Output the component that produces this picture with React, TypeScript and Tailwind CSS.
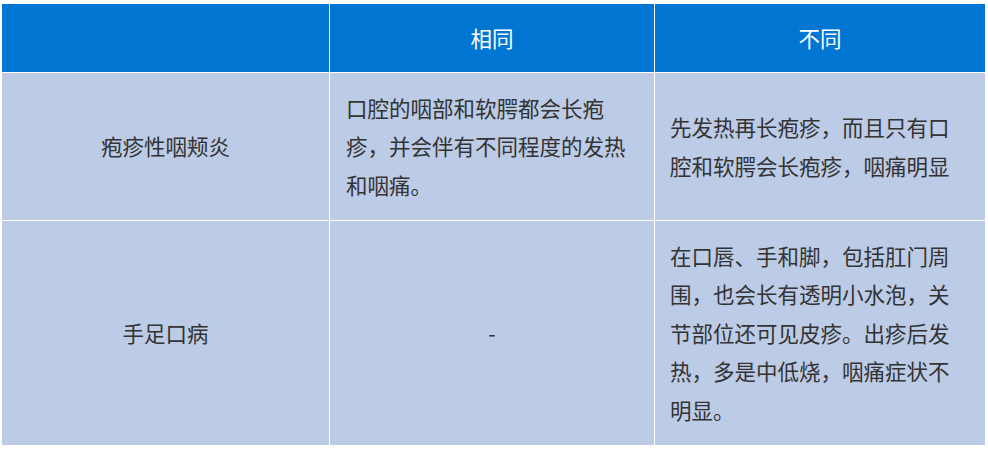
import React from "react";

const font = { fontFamily: '"Noto Sans CJK SC", "Noto Sans", sans-serif' };

export default function App() {
  return (
    <div className="w-[988px] h-[450px] bg-white pt-[4px] pl-[2px]" style={font}>
      <div className="grid grid-cols-[327px_324px_330px] grid-rows-[68px_147px_224px] gap-px bg-white w-[983px] text-[21.5px] leading-[38.5px] text-[#333333]">
        <div className="bg-[#0075d2]"></div>
        <div className="bg-[#0075d2] text-white flex items-center justify-center">相同</div>
        <div className="bg-[#0075d2] text-white flex items-center justify-center">不同</div>

        <div className="bg-[#bccbe6] flex items-center justify-center">疱疹性咽颊炎</div>
        <div className="bg-[#bccbe6] flex items-center pl-[16px] pr-[14px]">
          <p>口腔的咽部和软腭都会长疱疹，并会伴有不同程度的发热和咽痛。</p>
        </div>
        <div className="bg-[#bccbe6] flex items-center pl-[15px] pr-[15px]">
          <p>先发热再长疱疹，而且只有口腔和软腭会长疱疹，咽痛明显</p>
        </div>

        <div className="bg-[#bccbe6] flex items-center justify-center">手足口病</div>
        <div className="bg-[#bccbe6] flex items-center justify-center">-</div>
        <div className="bg-[#bccbe6] flex items-center pl-[15px] pr-[15px]">
          <p>在口唇、手和脚，包括肛门周围，也会长有透明小水泡，关节部位还可见皮疹。出疹后发热，多是中低烧，咽痛症状不明显。</p>
        </div>
      </div>
    </div>
  );
}
